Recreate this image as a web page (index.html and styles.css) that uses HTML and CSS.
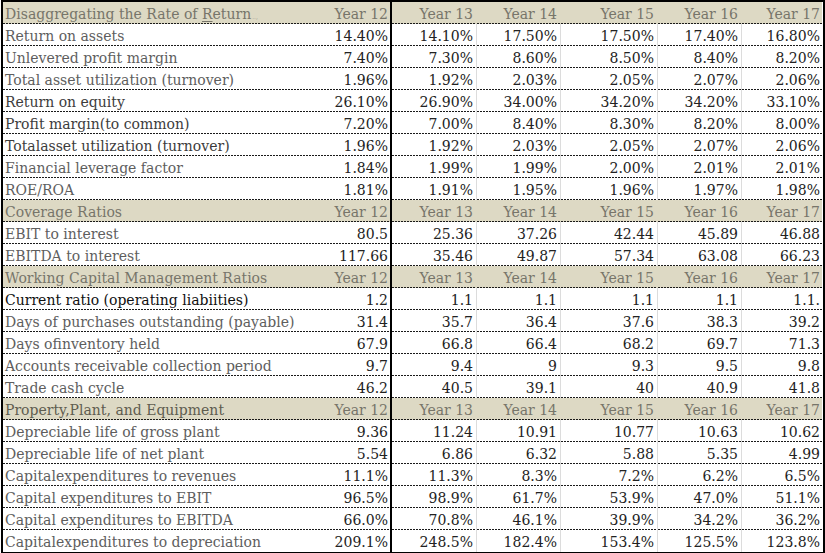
FILE: index.html
```html
<!DOCTYPE html>
<html lang="en">
<head>
<meta charset="utf-8">
<title>Ratios</title>
<link rel="stylesheet" href="styles.css">
</head>
<body>
<div class="sheet">
  <div class="c hd lbl">Disaggregating the Rate of <u>R</u>eturn<span class="tiny">..,</span></div>
  <div class="c hd y12">Year 12</div><div class="c hd">Year 13</div><div class="c hd">Year 14</div><div class="c hd">Year 15</div><div class="c hd">Year 16</div><div class="c hd last">Year 17</div>

  <div class="c lbl">Return on assets</div>
  <div class="c y12">14.40%</div><div class="c">14.10%</div><div class="c">17.50%</div><div class="c">17.50%</div><div class="c">17.40%</div><div class="c last">16.80%</div>

  <div class="c lbl">Unlevered profit margin</div>
  <div class="c y12">7.40%</div><div class="c">7.30%</div><div class="c">8.60%</div><div class="c">8.50%</div><div class="c">8.40%</div><div class="c last">8.20%</div>

  <div class="c lbl">Total asset utilization (turnover)</div>
  <div class="c y12">1.96%</div><div class="c">1.92%</div><div class="c">2.03%</div><div class="c">2.05%</div><div class="c">2.07%</div><div class="c last">2.06%</div>

  <div class="c lbl dark">Return on equity</div>
  <div class="c y12">26.10%</div><div class="c">26.90%</div><div class="c">34.00%</div><div class="c">34.20%</div><div class="c">34.20%</div><div class="c last">33.10%</div>

  <div class="c lbl dark">Profit margin(to common)</div>
  <div class="c y12">7.20%</div><div class="c">7.00%</div><div class="c">8.40%</div><div class="c">8.30%</div><div class="c">8.20%</div><div class="c last">8.00%</div>

  <div class="c lbl dark">Totalasset utilization (turnover)</div>
  <div class="c y12">1.96%</div><div class="c">1.92%</div><div class="c">2.03%</div><div class="c">2.05%</div><div class="c">2.07%</div><div class="c last">2.06%</div>

  <div class="c lbl">Financial leverage factor</div>
  <div class="c y12">1.84%</div><div class="c">1.99%</div><div class="c">1.99%</div><div class="c">2.00%</div><div class="c">2.01%</div><div class="c last">2.01%</div>

  <div class="c lbl">ROE/ROA</div>
  <div class="c y12">1.81%</div><div class="c">1.91%</div><div class="c">1.95%</div><div class="c">1.96%</div><div class="c">1.97%</div><div class="c last">1.98%</div>

  <div class="c hd lbl">Coverage Ratios</div>
  <div class="c hd y12">Year 12</div><div class="c hd">Year 13</div><div class="c hd">Year 14</div><div class="c hd">Year 15</div><div class="c hd">Year 16</div><div class="c hd last">Year 17</div>

  <div class="c lbl">EBIT to interest</div>
  <div class="c y12">80.5</div><div class="c">25.36</div><div class="c">37.26</div><div class="c">42.44</div><div class="c">45.89</div><div class="c last">46.88</div>

  <div class="c lbl">EBITDA to interest</div>
  <div class="c y12">117.66</div><div class="c">35.46</div><div class="c">49.87</div><div class="c">57.34</div><div class="c">63.08</div><div class="c last">66.23</div>

  <div class="c hd lbl">Working Capital Management Ratios</div>
  <div class="c hd y12">Year 12</div><div class="c hd">Year 13</div><div class="c hd">Year 14</div><div class="c hd">Year 15</div><div class="c hd">Year 16</div><div class="c hd last">Year 17</div>

  <div class="c lbl black">Current ratio (operating liabiities)</div>
  <div class="c y12">1.2</div><div class="c">1.1</div><div class="c">1.1</div><div class="c">1.1</div><div class="c">1.1</div><div class="c last">1.1.</div>

  <div class="c lbl">Days of purchases outstanding (payable)</div>
  <div class="c y12">31.4</div><div class="c">35.7</div><div class="c">36.4</div><div class="c">37.6</div><div class="c">38.3</div><div class="c last">39.2</div>

  <div class="c lbl">Days ofinventory held</div>
  <div class="c y12">67.9</div><div class="c">66.8</div><div class="c">66.4</div><div class="c">68.2</div><div class="c">69.7</div><div class="c last">71.3</div>

  <div class="c lbl">Accounts receivable collection period</div>
  <div class="c y12">9.7</div><div class="c">9.4</div><div class="c">9</div><div class="c">9.3</div><div class="c">9.5</div><div class="c last">9.8</div>

  <div class="c lbl">Trade cash cycle</div>
  <div class="c y12">46.2</div><div class="c">40.5</div><div class="c">39.1</div><div class="c">40</div><div class="c">40.9</div><div class="c last">41.8</div>

  <div class="c hd lbl dkhd">Property,Plant, and Equipment</div>
  <div class="c hd y12">Year 12</div><div class="c hd">Year 13</div><div class="c hd">Year 14</div><div class="c hd">Year 15</div><div class="c hd">Year 16</div><div class="c hd last">Year 17</div>

  <div class="c lbl">Depreciable life of gross plant</div>
  <div class="c y12">9.36</div><div class="c">11.24</div><div class="c">10.91</div><div class="c">10.77</div><div class="c">10.63</div><div class="c last">10.62</div>

  <div class="c lbl">Depreciable life of net plant</div>
  <div class="c y12">5.54</div><div class="c">6.86</div><div class="c">6.32</div><div class="c">5.88</div><div class="c">5.35</div><div class="c last">4.99</div>

  <div class="c lbl">Capitalexpenditures to revenues</div>
  <div class="c y12">11.1%</div><div class="c">11.3%</div><div class="c">8.3%</div><div class="c">7.2%</div><div class="c">6.2%</div><div class="c last">6.5%</div>

  <div class="c lbl">Capital expenditures to EBIT</div>
  <div class="c y12">96.5%</div><div class="c">98.9%</div><div class="c">61.7%</div><div class="c">53.9%</div><div class="c">47.0%</div><div class="c last">51.1%</div>

  <div class="c lbl">Capital expenditures to EBITDA</div>
  <div class="c y12">66.0%</div><div class="c">70.8%</div><div class="c">46.1%</div><div class="c">39.9%</div><div class="c">34.2%</div><div class="c last">36.2%</div>

  <div class="c lbl end">Capitalexpenditures to depreciation</div>
  <div class="c y12 end">209.1%</div><div class="c end">248.5%</div><div class="c end">182.4%</div><div class="c end">153.4%</div><div class="c end">125.5%</div><div class="c last end">123.8%</div>
</div>
</body>
</html>
```

FILE: styles.css
```css
html, body {
  margin: 0;
  padding: 0;
  background: #ffffff;
}

body {
  padding-left: 1px;
  font-family: "DejaVu Serif", "Liberation Serif", serif;
  font-size: 14px;
}

.sheet {
  width: 824px;
  box-sizing: border-box;
  border: 2px solid #000;
  display: grid;
  grid-template-columns: 297px 92px 85px 84px 97px 84px 80px;
  grid-auto-rows: 22px;
}

.c {
  box-sizing: border-box;
  border-right: 1px solid #dcdcdc;
  background-image: repeating-linear-gradient(to right, #1a1a1a 0 2px, transparent 2px 3px);
  background-size: 100% 1px;
  background-position: left bottom;
  background-repeat: no-repeat;
  padding-top: 3px;
  line-height: 19px;
  text-align: right;
  padding-right: 3px;
  color: #222;
  white-space: nowrap;
  overflow: hidden;
}

.c.lbl {
  text-align: left;
  padding-left: 2px;
  padding-right: 0;
  border-right: none;
  color: #5e5e5e;
}

.c.lbl.dark {
  color: #3c3c3c;
}

.c.lbl.black {
  color: #111;
}

.c.y12 {
  border-right: 2px solid #000;
  padding-right: 2px;
}

.c.last {
  border-right: none;
  padding-right: 2px;
}

.c.hd {
  background-color: #ddd9c4;
  color: #77756a;
  border-right-color: #ddd9c4;
}

.c.hd.y12 {
  border-right-color: #000;
}

.c.hd.dkhd {
  color: #5f5d50;
}

.c.end {
  background-image: none;
}

.tiny {
  font-size: 6px;
  color: #a09e8c;
  margin-left: 1px;
}

u {
  text-decoration-thickness: 1px;
  text-underline-offset: 2px;
}
```
